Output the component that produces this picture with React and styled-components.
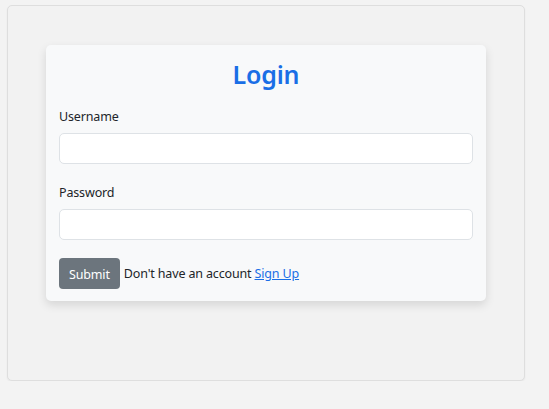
import React from "react";
import styled, { createGlobalStyle } from "styled-components";

const Global = createGlobalStyle`
  html, body { margin: 0; padding: 0; background: #f3f3f3; }
  body { font-family: "Noto Sans", "Open Sans", sans-serif; color: #212529; }
  * { box-sizing: border-box; }
`;

const Page = styled.div`
  padding: 5px 0 0 7px;
`;

const Panel = styled.div`
  width: 518px;
  height: 376px;
  background: #f2f2f2;
  border: 1px solid #dedede;
  border-radius: 5px;
  box-shadow: 0 1px 2px rgba(0, 0, 0, 0.06);
  padding: 39px 38px;
`;

const Card = styled.form`
  width: 440px;
  background: #f8f9fa;
  border-radius: 5px;
  box-shadow: 0 4px 10px rgba(0, 0, 0, 0.12);
  padding: 14px 13px 12px;
  display: flex;
  flex-direction: column;
`;

const Title = styled.h2`
  margin: 0 0 18px;
  text-align: center;
  color: #1a6ee6;
  font-size: 25px;
  font-weight: 600;
  line-height: 30px;
  letter-spacing: -0.2px;
`;

const Field = styled.div`
  display: flex;
  flex-direction: column;
  gap: 6px;
  margin-bottom: ${(p) => p.$mb || 0}px;
`;

const Label = styled.label`
  font-size: 12.5px;
  letter-spacing: -0.15px;
  line-height: 20px;
  color: #212529;
`;

const Input = styled.input`
  height: 31px;
  width: 100%;
  border: 1px solid #dee2e6;
  border-radius: 5px;
  background: #fff;
  font: inherit;
  padding: 0 10px;
`;

const Actions = styled.div`
  display: flex;
  align-items: center;
  gap: 4px;
  margin-top: 18px;
  font-size: 12.5px;
  letter-spacing: -0.15px;
`;

const Button = styled.button`
  height: 31px;
  padding: 2px 10px 0;
  border: none;
  border-radius: 4px;
  background: #6c757d;
  color: #fff;
  font-family: inherit;
  font-size: 12.5px;
  letter-spacing: -0.15px;
  line-height: 29px;
`;

const Text = styled.span`
  color: #212529;
`;

const Link = styled.a`
  color: #1a6ee6;
  text-decoration: underline;
`;

export default function App() {
  return (
    <>
      <Global />
      <Page>
        <Panel>
          <Card onSubmit={(e) => e.preventDefault()}>
            <Title>Login</Title>
            <Field $mb={19}>
              <Label>Username</Label>
              <Input type="text" />
            </Field>
            <Field>
              <Label>Password</Label>
              <Input type="password" />
            </Field>
            <Actions>
              <Button type="submit">Submit</Button>
              <Text>
                Don't have an account <Link href="#">Sign Up</Link>
              </Text>
            </Actions>
          </Card>
        </Panel>
      </Page>
    </>
  );
}
